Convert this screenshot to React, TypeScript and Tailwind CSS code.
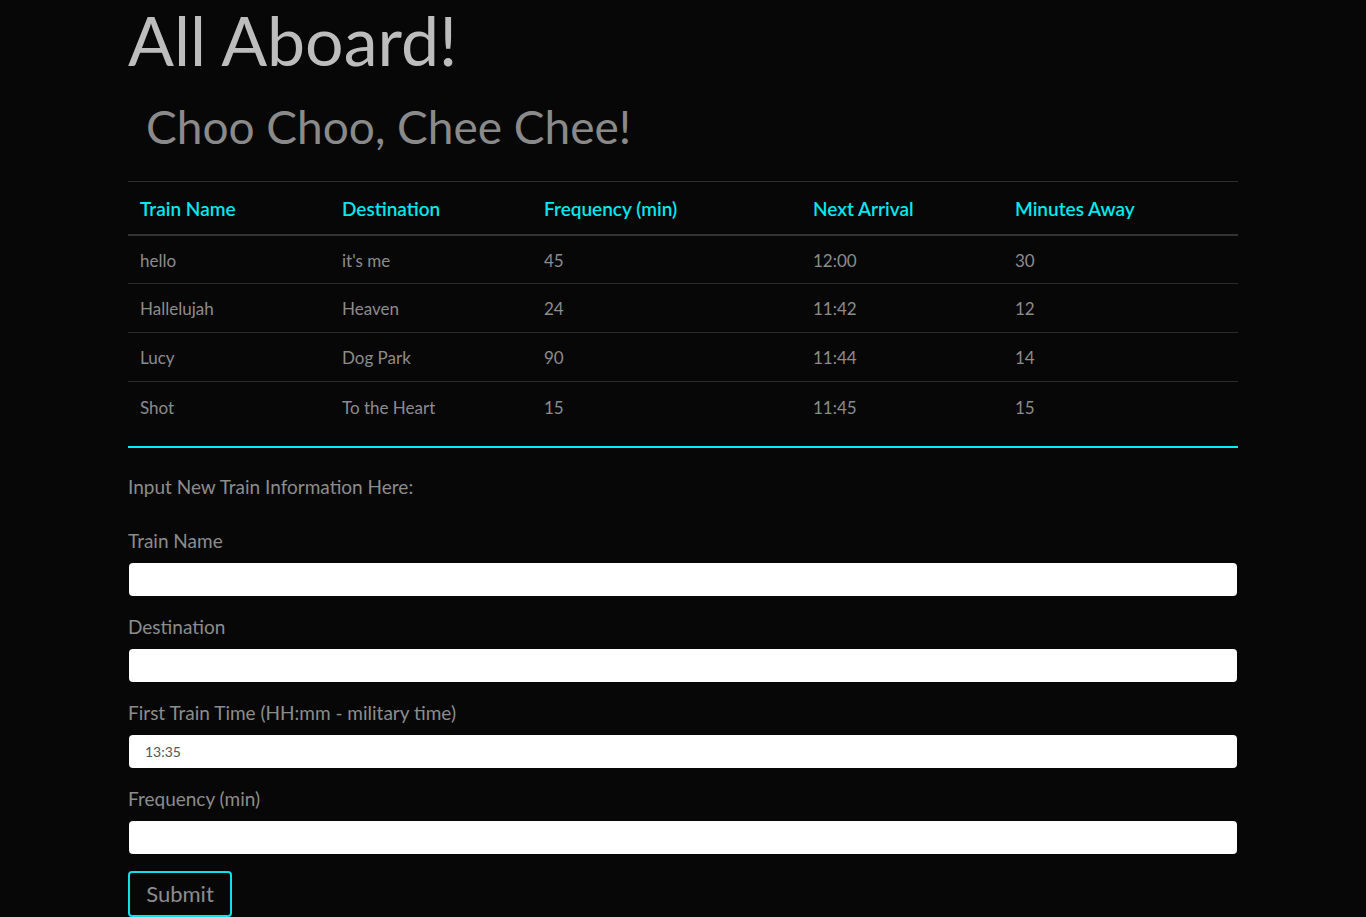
const trains = [
  { name: "hello", dest: "it's me", freq: "45", next: "12:00", away: "30" },
  { name: "Hallelujah", dest: "Heaven", freq: "24", next: "11:42", away: "12" },
  { name: "Lucy", dest: "Dog Park", freq: "90", next: "11:44", away: "14" },
  { name: "Shot", dest: "To the Heart", freq: "15", next: "11:45", away: "15" },
];

const fields = [
  { label: "Train Name", value: "" },
  { label: "Destination", value: "" },
  { label: "First Train Time (HH:mm - military time)", value: "13:35" },
  { label: "Frequency (min)", value: "" },
];

export default function App() {
  return (
    <div className="min-h-[917px] bg-[#070707] font-['Lato',sans-serif]">
      <div className="mx-auto w-[1110px]">
        <h1 className="text-[68px] leading-[84px] font-normal text-[#bdbdbd] -mt-[2px]">All Aboard!</h1>
        <h2 className="mt-[17px] pl-[18px] text-[46px] leading-[56px] font-normal text-[#8a8a8a]">Choo Choo, Chee Chee!</h2>

        <table className="mt-[26px] w-full border-t border-[#2e2e2e] text-left">
          <thead>
            <tr className="border-b-2 border-[#333]">
              <th className="h-[53px] w-[202px] px-3 pt-[2px] pb-0 text-[19px] font-semibold text-[#00e8f0]">Train Name</th>
              <th className="h-[53px] w-[202px] px-3 pt-[2px] pb-0 text-[19px] font-semibold text-[#00e8f0]">Destination</th>
              <th className="h-[53px] w-[269px] px-3 pt-[2px] pb-0 text-[19px] font-semibold text-[#00e8f0]">Frequency (min)</th>
              <th className="h-[53px] w-[202px] px-3 pt-[2px] pb-0 text-[19px] font-semibold text-[#00e8f0]">Next Arrival</th>
              <th className="h-[53px] px-3 pt-[2px] pb-0 text-[19px] font-semibold text-[#00e8f0]">Minutes Away</th>
            </tr>
          </thead>
          <tbody>
            {trains.map((t, i) => (
              <tr key={t.name} className={i < trains.length - 1 ? "border-b border-[#2a2a2a]" : ""}>
                <td className="h-[49px] px-3 pt-[2px] text-[17px] text-[#8c8c8c]">{t.name}</td>
                <td className="h-[49px] px-3 pt-[2px] text-[17px] text-[#8c8c8c]">{t.dest}</td>
                <td className="h-[49px] px-3 pt-[2px] text-[17px] text-[#8c8c8c]">{t.freq}</td>
                <td className="h-[49px] px-3 pt-[2px] text-[17px] text-[#8c8c8c]">{t.next}</td>
                <td className="h-[49px] px-3 pt-[2px] text-[17px] text-[#8c8c8c]">{t.away}</td>
              </tr>
            ))}
          </tbody>
        </table>

        <div className="mt-[15px] h-[2px] bg-[#00f0f0]" />

        <p className="mt-[27px] text-[19px] leading-[24px] text-[#8c8c8c]">Input New Train Information Here:</p>

        <form className="mt-[30px] flex flex-col">
          {fields.map((f) => (
            <div key={f.label} className="mb-[19px] flex flex-col">
              <label className="text-[19px] leading-[24px] text-[#8c8c8c]">{f.label}</label>
              <input
                readOnly
                value={f.value}
                className="mt-[10px] ml-px h-[33px] w-[1108px] rounded-[4px] bg-white px-4 text-[14px] text-[#555] outline-none"
              />
            </div>
          ))}
          <button
            type="button"
            className="-mt-[2px] h-[46px] w-[104px] rounded-[4px] border-2 border-[#10e0e8] text-[22px] text-[#8c8c8c]"
          >
            Submit
          </button>
        </form>
      </div>
    </div>
  );
}
